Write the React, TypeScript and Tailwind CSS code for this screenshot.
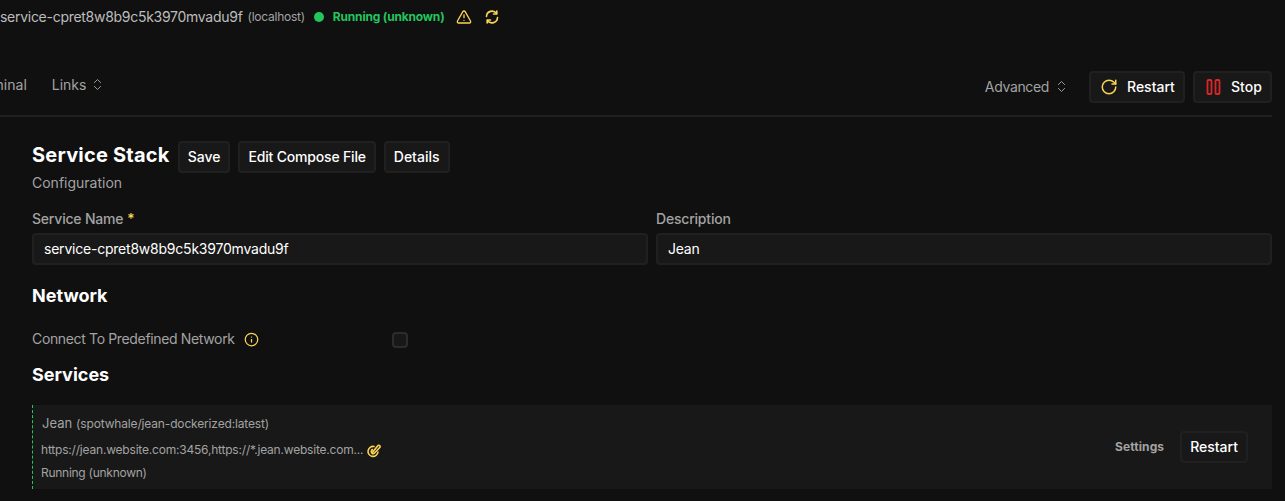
import { ChevronsUpDown, RotateCw, TriangleAlert, Info } from 'lucide-react';

const FONT = "font-['Inter','Noto_Sans',sans-serif]";

function ActionButton({ children, className = '' }: { children: React.ReactNode; className?: string }) {
  return (
    <button
      className={`flex h-8 items-center rounded-[4px] border-2 border-[#202020] bg-[#181818] text-sm font-medium text-white ${className}`}
    >
      {children}
    </button>
  );
}

function Field({ label, value, required }: { label: string; value: string; required?: boolean }) {
  return (
    <div className="flex min-w-0 flex-1 flex-col">
      <label className="mb-1 h-[20px] text-sm font-medium leading-5 tracking-[-0.2px] text-[#a3a3a3]">
        {label}
        {required && <span className="ml-1 text-[#fcd452]">*</span>}
      </label>
      <input
        readOnly
        value={value}
        className="h-8 w-full rounded-[4px] border-2 border-[#202020] bg-[#181818] px-[10px] pb-[1px] text-sm tracking-[-0.22px] text-white outline-none"
      />
    </div>
  );
}

function LinkEdit() {
  return (
    <svg viewBox="0 0 16 16" className="ml-[3px] size-4" fill="none" stroke="#fcd452" strokeWidth="1.600" strokeLinecap="round" strokeLinejoin="round">
      <path d="M8 4.500A5 5 0 1 0 12 10" />
      <path d="M6 11l6-7.500a1.400 1.400 0 0 1 2 1.800L8.500 11a1.800 1.800 0 0 1-2.500.3z" />
      <path d="M6.500 7.500a2.500 2.500 0 0 0-1 3" />
    </svg>
  );
}

function SyncIcon() {
  return (
    <svg viewBox="0 0 16 16" className="ml-3 size-4" fill="none" stroke="#fcd452" strokeWidth="1.600" strokeLinecap="round" strokeLinejoin="round">
      <path d="M2.500 7.500A5.500 5.500 0 0 1 12.500 4.500" />
      <path d="M9.500 5h3.300V2" />
      <path d="M13.500 8.500A5.500 5.500 0 0 1 3.500 11.500" />
      <path d="M6.500 11H3.200v3" />
    </svg>
  );
}

export default function App() {
  return (
    <div className={`h-[501px] w-[1285px] overflow-hidden bg-[#101010] ${FONT}`}>
      <div className="flex h-[34px] items-center whitespace-nowrap">
        <span className="text-sm tracking-[-0.28px] text-[#bdbdbd]">service-cpret8w8b9c5k3970mvadu9f</span>
        <span className="ml-[5px] text-xs tracking-[-0.25px] text-[#a3a3a3]">(localhost)</span>
        <span className="ml-[9px] size-[10px] rounded-full bg-[#22c55e]" />
        <span className="ml-[9px] text-xs font-bold tracking-[-0.18px] text-[#22c55e]">Running (unknown)</span>
        <TriangleAlert className="ml-[11px] size-4 text-[#fcd452]" strokeWidth={2} />
        <SyncIcon />
      </div>

      <div className="mr-[13px] flex h-[83px] items-center border-b-2 border-[#202020] pb-[5px] pt-[29px]">
        <div className="flex flex-1 -translate-y-[2px] items-center text-sm text-[#a3a3a3]">
          <span className="-ml-[30px]">Terminal</span>
          <span className="ml-[25px] flex items-center gap-1">
            Links
            <ChevronsUpDown className="size-[15px]" strokeWidth={1.5} />
          </span>
        </div>
        <span className="flex items-center gap-[5px] text-sm tracking-[-0.35px] text-[#a3a3a3]">
          Advanced
          <ChevronsUpDown className="size-[15px]" strokeWidth={1.5} />
        </span>
        <ActionButton className="ml-5 w-[96px] pl-[9px]">
          <RotateCw className="mr-[9px] size-[18px] text-[#fcd452]" strokeWidth={2} />
          Restart
        </ActionButton>
        <ActionButton className="ml-2 w-[79px] pl-[11px]">
          <svg viewBox="0 0 16 16" className="mr-[9px] size-4" fill="none" stroke="#dc2626" strokeWidth="1.800">
            <rect x="1.500" y="1" width="4" height="14" rx="1" />
            <rect x="9.500" y="1" width="4" height="14" rx="1" />
          </svg>
          Stop
        </ActionButton>
      </div>

      <div className="ml-8 mr-[13px] flex flex-col">
        <div className="mt-6 flex items-center">
          <h2 className="-translate-y-[2px] text-xl font-bold leading-8 tracking-[0.22px] text-white">Service Stack</h2>
          <ActionButton className="ml-2 px-2">Save</ActionButton>
          <ActionButton className="ml-2 px-2 tracking-[-0.18px]">Edit Compose File</ActionButton>
          <ActionButton className="ml-2 px-2">Details</ActionButton>
        </div>
        <p className="h-5 text-sm leading-5 text-[#a3a3a3]">Configuration</p>

        <div className="mt-4 flex gap-2">
          <Field label="Service Name" value="service-cpret8w8b9c5k3970mvadu9f" required />
          <Field label="Description" value="Jean" />
        </div>

        <h3 className="mt-[17px] text-lg font-bold leading-7 text-white">Network</h3>
        <div className="mt-[18px] flex h-6 items-center text-sm text-[#a3a3a3]">
          <span className="flex w-[360px] -translate-y-[1px] items-center tracking-[-0.35px]">
            Connect To Predefined Network
            <Info className="ml-[9px] size-[15px] text-[#fcd452]" strokeWidth={2} />
          </span>
          <span className="size-4 rounded-[4px] border-2 border-[#2c2c2c] bg-[#181818]" />
        </div>
        <h3 className="mt-[9px] text-lg font-bold leading-7 text-white">Services</h3>

        <div className="mt-4 flex h-[84px] items-center border-l border-dashed border-[#22c55e] bg-[#181818] pl-[9px] pr-6">
          <div className="flex min-w-0 flex-1 flex-col pt-[6px]">
            <div className="flex h-[24px] items-baseline text-[#a3a3a3]">
              <span className="text-[13px]">Jean</span>
              <span className="ml-1 text-xs tracking-[-0.16px]">(spotwhale/jean-dockerized:latest)</span>
            </div>
            <div className="-ml-[1px] flex h-[24px] items-center text-xs tracking-[-0.2px] text-[#a3a3a3]">
              https://jean.website.com:3456,https://*.jean.website.com...
              <LinkEdit />
            </div>
            <div className="-ml-[1px] flex h-[24px] -translate-y-[1px] items-center text-xs tracking-[-0.27px] text-[#a3a3a3]">Running (unknown)</div>
          </div>
          <span className="mr-4 text-xs font-bold tracking-[0.1px] text-[#a3a3a3]">Settings</span>
          <ActionButton className="px-2">Restart</ActionButton>
        </div>
      </div>
    </div>
  );
}
